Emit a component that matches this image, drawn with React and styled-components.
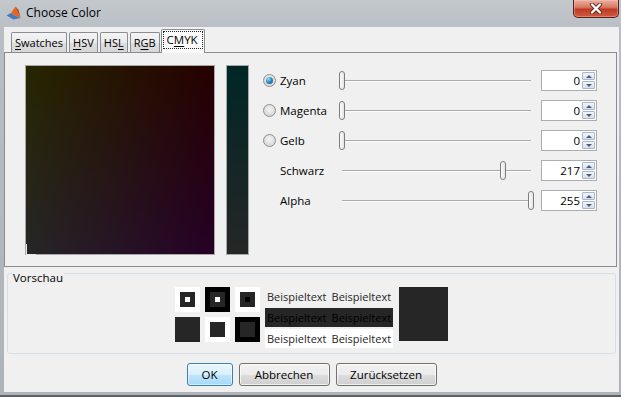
import React from 'react';
import styled, { createGlobalStyle, css } from 'styled-components';

const GlobalStyle = createGlobalStyle`
  html, body {
    margin: 0;
    padding: 0;
    background: #ffffff;
  }
  body {
    font-family: "Open Sans", "Noto Sans", sans-serif;
    font-size: 11.5px;
    color: #1a1a1a;
  }
`;

const K = 38; // 255 - 217
const INK = `rgb(${K},${K},${K})`;

const Window = styled.div`
  width: 621px;
  height: 397px;
  box-sizing: border-box;
  display: flex;
  flex-direction: column;
  background: linear-gradient(to bottom, #c3c8cd 0, #b9bec4 30px, #aeb3b9 100%);
  border-bottom: 2px solid #5d6166;
`;

const TitleBar = styled.div`
  height: 27px;
  display: flex;
  align-items: flex-start;
  flex-shrink: 0;
`;

const AppIcon = styled.svg`
  margin: 6px 0 0 6px;
`;

const Title = styled.div`
  margin-left: 5px;
  line-height: 26px;
  font-size: 12px;
  color: #000;
`;

const CloseButton = styled.div`
  margin-left: auto;
  margin-right: 2px;
  width: 46px;
  height: 18px;
  box-sizing: border-box;
  border: 1px solid #5a2118;
  border-top: none;
  border-radius: 0 0 5px 5px;
  background: linear-gradient(to bottom, #eab0a2 0%, #d77a65 42%, #c13b22 55%, #cf5b43 100%);
  display: flex;
  align-items: center;
  justify-content: center;
  box-shadow: inset 0 0 0 1px rgba(255, 210, 200, 0.35);
`;

const Body = styled.div`
  flex: 1;
  margin: 0 2px 3px 4px;
  background: #f0f0f0;
  display: flex;
  flex-direction: column;
`;

const TabStrip = styled.div`
  height: 25px;
  display: flex;
  align-items: flex-end;
  gap: 2px;
  padding-left: 7px;
  flex-shrink: 0;
`;

const Tab = styled.div`
  position: relative;
  height: 20px;
  box-sizing: border-box;
  padding: 0 3px;
  border: 1px solid #898c95;
  border-bottom: none;
  border-radius: 2px 2px 0 0;
  background: linear-gradient(to bottom, #f4f4f4 0%, #ebebeb 50%, #dedede 51%, #d6d6d6 100%);
  display: flex;
  align-items: center;
  font-size: 11px;
  color: #000;
  ${(p) =>
    p.$active &&
    css`
      height: 24px;
      margin: 0 -2px -1px -1px;
      padding: 0 2px 3px;
      background: #fcfcfc;
      z-index: 1;
    `}
  u {
    text-decoration: underline;
    text-underline-offset: 2px;
  }
`;

const Focus = styled.span`
  outline: 1px dotted #222;
  outline-offset: 0;
  padding: 0 4px 0 3px;
  line-height: 16px;
  font-size: 11.5px;
`;

const TabPanel = styled.div`
  height: 215px;
  box-sizing: border-box;
  margin-right: 2px;
  border: 1px solid #898c95;
  display: flex;
  align-items: flex-start;
  padding: 12px 0 0 20px;
  flex-shrink: 0;
`;

const ColorField = styled.div`
  position: relative;
  width: 190px;
  height: 190px;
  box-sizing: border-box;
  border: 1px solid #a8a8a8;
  background-image: linear-gradient(to right, rgb(${K}, ${K}, 0), rgb(${K}, 0, 0)),
    linear-gradient(to bottom, rgb(0, 0, 0), rgb(0, 0, ${K}));
  background-blend-mode: lighten;
`;

const Marker = styled.div`
  position: absolute;
  left: 0;
  bottom: -1px;
  width: 9px;
  height: 10px;
  border-left: 1px solid #e8e8e8;
  border-bottom: 1px solid #e8e8e8;
`;

const Strip = styled.div`
  width: 23px;
  height: 190px;
  box-sizing: border-box;
  margin-left: 11px;
  border: 1px solid #a8a8a8;
  background: linear-gradient(to bottom, rgb(0, ${K}, ${K}), ${INK});
`;

const Controls = styled.div`
  margin-left: 14px;
  padding-top: 5px;
  display: flex;
  flex-direction: column;
  gap: 9px;
`;

const Row = styled.div`
  height: 21px;
  display: flex;
  align-items: center;
`;

const RadioCell = styled.div`
  width: 17px;
  display: flex;
  align-items: center;
`;

const Radio = styled.span`
  width: 13px;
  height: 13px;
  box-sizing: border-box;
  border-radius: 50%;
  border: 1px solid #8e8f8f;
  background: radial-gradient(circle at 50% 40%, #f6f6f6 0%, #d8d8d8 70%, #cfcfcf 100%);
  display: flex;
  align-items: center;
  justify-content: center;
  &::after {
    content: "";
    width: 7px;
    height: 7px;
    border-radius: 50%;
    display: ${(p) => (p.$checked ? 'block' : 'none')};
    background: radial-gradient(circle at 35% 30%, #9be0fb 0%, #2d8dc6 45%, #144f7c 100%);
  }
`;

const Label = styled.div`
  width: 56px;
  font-size: 11.5px;
  color: #000;
`;

const Slider = styled.div`
  position: relative;
  width: 198px;
  height: 21px;
`;

const Track = styled.div`
  position: absolute;
  left: 6px;
  right: 3px;
  top: 10px;
  height: 1px;
  background: #a9a9a9;
  box-shadow: 0 1px 0 #fdfdfd;
`;

const Thumb = styled.div`
  position: absolute;
  top: 1px;
  width: 6px;
  height: 19px;
  box-sizing: border-box;
  border: 1px solid #7c7c7c;
  border-radius: 3px;
  background: linear-gradient(to right, #fdfdfd, #e4e4e4);
`;

const Spinner = styled.div`
  margin-left: 7px;
  width: 56px;
  height: 21px;
  box-sizing: border-box;
  border: 1px solid #abadb3;
  background: #fff;
  display: flex;
`;

const SpinValue = styled.div`
  flex: 1;
  text-align: right;
  padding-right: 2px;
  line-height: 19px;
  font-size: 11.5px;
  color: #000;
`;

const SpinArrows = styled.div`
  width: 13px;
  padding: 1px 1px 1px 0;
  display: flex;
  flex-direction: column;
  gap: 1px;
`;

const Arrow = styled.div`
  flex: 1;
  border: 1px solid #a9b7c9;
  border-radius: 1px;
  background: linear-gradient(to bottom, #f2f6fa, #d6e0ec);
  display: flex;
  align-items: center;
  justify-content: center;
  &::after {
    content: "";
    border-left: 3px solid transparent;
    border-right: 3px solid transparent;
    ${(p) =>
      p.$up
        ? css`border-bottom: 3px solid #4b5d7a;`
        : css`border-top: 3px solid #4b5d7a;`}
  }
`;

const Group = styled.div`
  position: relative;
  margin: 6px 3px 0 3px;
  height: 81px;
  box-sizing: border-box;
  border: 1px solid #d5dfe5;
  border-radius: 3px;
  padding-top: 13px;
  display: flex;
  justify-content: center;
  align-items: flex-start;
  flex-shrink: 0;
`;

const Legend = styled.div`
  position: absolute;
  left: 4px;
  top: -3px;
  padding: 0 1px;
  line-height: 14px;
  font-size: 11.5px;
  background: #f0f0f0;
  color: #000;
`;

const SwatchGrid = styled.div`
  display: grid;
  grid-template-columns: repeat(3, 25px);
  grid-auto-rows: 25px;
  gap: 5px;
`;

const Swatch = styled.div`
  background: ${(p) => p.$outer};
  display: flex;
  align-items: center;
  justify-content: center;
  &::before {
    content: "";
    width: 15px;
    height: 15px;
    box-sizing: border-box;
    background: ${INK};
    border: 5px solid ${INK};
    ${(p) => p.$dot && css`background: ${p.$dot};`}
  }
`;

const TextBlock = styled.div`
  margin-left: 5px;
  width: 128px;
  display: flex;
  flex-direction: column;
  gap: 2px;
`;

const TextLine = styled.div`
  height: 19px;
  line-height: 19px;
  padding-left: 2px;
  display: flex;
  gap: 5px;
  font-size: 11px;
  white-space: nowrap;
  overflow: hidden;
  ${(p) =>
    p.$variant === 'dark'
      ? css`background: ${INK}; color: #000;`
      : p.$variant === 'light'
      ? css`background: #fff; color: ${INK};`
      : css`color: ${INK};`}
`;

const BigSwatch = styled.div`
  margin-left: 6px;
  width: 49px;
  height: 54px;
  background: ${INK};
`;

const ButtonRow = styled.div`
  margin-top: 9px;
  display: flex;
  justify-content: center;
  gap: 6px;
`;

const Button = styled.div`
  width: ${(p) => p.$w}px;
  height: 23px;
  box-sizing: border-box;
  border: 1px solid #707070;
  border-radius: 3px;
  background: linear-gradient(to bottom, #f2f2f2 0%, #ebebeb 50%, #dddddd 51%, #cfcfcf 100%);
  box-shadow: inset 0 0 0 1px rgba(255, 255, 255, 0.7);
  display: flex;
  align-items: center;
  justify-content: center;
  font-size: 11.5px;
  color: #000;
  ${(p) =>
    p.$default &&
    css`
      border-color: #3c7fb1;
      background: linear-gradient(to bottom, #eaf6fd 0%, #d9f0fc 50%, #bee6fd 51%, #a7d9f5 100%);
      box-shadow: inset 0 0 0 1px rgba(255, 255, 255, 0.5);
    `}
`;

const tabs = [
  { pre: '', key: 'S', post: 'watches' },
  { pre: '', key: 'H', post: 'SV' },
  { pre: 'HS', key: 'L', post: '' },
  { pre: 'R', key: 'G', post: 'B' },
  { pre: 'C', key: 'M', post: 'YK', active: true },
];

const channels = [
  { name: 'Zyan', value: 0, radio: true, checked: true },
  { name: 'Magenta', value: 0, radio: true },
  { name: 'Gelb', value: 0, radio: true },
  { name: 'Schwarz', value: 217 },
  { name: 'Alpha', value: 255 },
];

const swatches = [
  { outer: '#fff', dot: '#fff' },
  { outer: '#000', dot: '#fff' },
  { outer: '#fff', dot: '#000' },
  { outer: INK },
  { outer: '#fff' },
  { outer: '#000' },
];

function MatlabIcon() {
  return (
    <AppIcon width="15" height="14" viewBox="0 0 15 14">
      <path d="M0.5 9.5 L5 7 L8 9 L14.5 12 L7.5 13.5 Z" fill="#3f7cc4" />
      <path d="M5 7 L9.5 0.5 L11.5 5 L14.5 12 L8 9 Z" fill="#e8651f" />
      <path d="M9.5 0.5 L11.5 5 L14.5 12 L12.5 4 Z" fill="#a8320f" />
    </AppIcon>
  );
}

function ChannelRow({ name, value, radio, checked }) {
  const x = 6 + (value / 255) * 189 - 3;
  return (
    <Row>
      <RadioCell>{radio && <Radio $checked={checked} />}</RadioCell>
      <Label>{name}</Label>
      <Slider>
        <Track />
        <Thumb style={{ left: x }} />
      </Slider>
      <Spinner>
        <SpinValue>{value}</SpinValue>
        <SpinArrows>
          <Arrow $up />
          <Arrow />
        </SpinArrows>
      </Spinner>
    </Row>
  );
}

function Sample({ variant }) {
  return (
    <TextLine $variant={variant}>
      <span>Beispieltext</span>
      <span>Beispieltext</span>
    </TextLine>
  );
}

export default function App() {
  return (
    <>
      <GlobalStyle />
      <Window>
        <TitleBar>
          <MatlabIcon />
          <Title>Choose Color</Title>
          <CloseButton>
            <svg width="14" height="11" viewBox="0 0 14 11">
              <path d="M3 1.5 L11 9.5 M11 1.5 L3 9.5" stroke="#6b2a20" strokeWidth="4.2" strokeLinecap="round" />
              <path d="M3 1.5 L11 9.5 M11 1.5 L3 9.5" stroke="#ffffff" strokeWidth="2.4" strokeLinecap="round" />
            </svg>
          </CloseButton>
        </TitleBar>
        <Body>
          <TabStrip>
            {tabs.map((t) => (
              <Tab key={t.pre + t.key} $active={t.active}>
                {t.active ? (
                  <Focus>
                    {t.pre}
                    <u>{t.key}</u>
                    {t.post}
                  </Focus>
                ) : (
                  <>
                    {t.pre}
                    <u>{t.key}</u>
                    {t.post}
                  </>
                )}
              </Tab>
            ))}
          </TabStrip>
          <TabPanel>
            <ColorField>
              <Marker />
            </ColorField>
            <Strip />
            <Controls>
              {channels.map((c) => (
                <ChannelRow key={c.name} {...c} />
              ))}
            </Controls>
          </TabPanel>
          <Group>
            <Legend>Vorschau</Legend>
            <SwatchGrid>
              {swatches.map((s, i) => (
                <Swatch key={i} $outer={s.outer} $dot={s.dot} />
              ))}
            </SwatchGrid>
            <TextBlock>
              <Sample />
              <Sample variant="dark" />
              <Sample variant="light" />
            </TextBlock>
            <BigSwatch />
          </Group>
          <ButtonRow>
            <Button $w={46} $default>OK</Button>
            <Button $w={91}>Abbrechen</Button>
            <Button $w={101}>Zurücksetzen</Button>
          </ButtonRow>
        </Body>
      </Window>
    </>
  );
}
